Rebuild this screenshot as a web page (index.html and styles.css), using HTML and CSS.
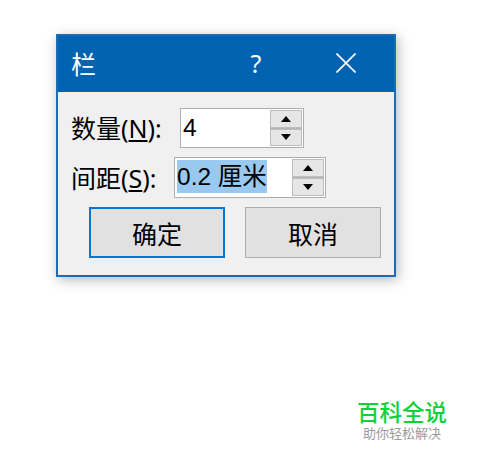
FILE: index.html
```html
<!DOCTYPE html>
<html lang="zh">
<head>
<meta charset="utf-8">
<title>栏</title>
<link rel="stylesheet" href="styles.css">
</head>
<body>
<div class="dialog">
  <header class="titlebar">
    <span class="title">栏</span>
    <span class="help">?</span>
    <svg class="close" width="20" height="20" viewBox="0 0 20 20"><path d="M0.5 0.5L19.5 19.5M19.5 0.5L0.5 19.5" stroke="#fff" stroke-width="1.6" fill="none"/></svg>
  </header>
  <div class="body">
    <div class="row row-count">
      <label class="label label-count">数量(<u>N</u>):</label>
      <div class="spin spin-count">
        <span class="value">4</span>
        <div class="arrows">
          <span class="arrow"><i class="up"></i></span>
          <span class="arrow"><i class="down"></i></span>
        </div>
      </div>
    </div>
    <div class="row row-gap">
      <label class="label label-gap">间距(<u>S</u>):</label>
      <div class="spin spin-gap">
        <span class="value"><span class="selected">0.2 厘米</span></span>
        <div class="arrows">
          <span class="arrow"><i class="up"></i></span>
          <span class="arrow"><i class="down"></i></span>
        </div>
      </div>
    </div>
    <div class="buttons">
      <button class="btn btn-default">确定</button>
      <button class="btn">取消</button>
    </div>
  </div>
</div>
<div class="watermark">
  <div class="wm-main">百科全说</div>
  <div class="wm-sub">助你轻松解决</div>
</div>
</body>
</html>
```
FILE: styles.css
```css
* { box-sizing: border-box; }
html, body { margin: 0; height: 100%; }
body {
  background: #fff;
  padding: 34px 0 0 56px;
  position: relative;
  overflow: hidden;
  font-family: "Noto Sans CJK SC", "Liberation Sans", sans-serif;
  color: #000;
}
.dialog {
  width: 340px;
  height: 243px;
  border: 2px solid #1a6db5;
  background: #f0f0f0;
  box-shadow: 2px 3px 12px rgba(0,0,0,.28);
  display: flex;
  flex-direction: column;
}
.titlebar {
  height: 56px;
  background: #0063b1;
  color: #fff;
  display: flex;
  align-items: center;
  padding: 0 0 2px 13px;
  flex: none;
}
.title { font-size: 25px; line-height: 30px; width: 178px; }
.help { font-family: "Noto Sans", sans-serif; font-size: 25px; line-height: 30px; width: 14px; text-align: center; }
.close { margin-left: 73px; }
.body { flex: 1; display: flex; flex-direction: column; padding: 16px 0 0 13px; }
.row { display: flex; align-items: center; }
.label { font-size: 25px; line-height: 40px; font-family: "Noto Sans", "Noto Sans CJK SC", sans-serif; flex: none; }
.label-count { width: 109px; }
.label-gap { width: 103px; }
.row-count { height: 40px; }
.row-gap { height: 41px; margin-top: 9px; }
.spin-count { width: 124px; }
.spin-gap { width: 152px; }
.spin {
  height: 100%;
  border: 1px solid #adadad;
  background: #fff;
  display: flex;
  padding: 1px;
}
.value {
  flex: 1;
  font-family: "Liberation Sans", "Noto Sans CJK SC", sans-serif;
  font-size: 24.5px;
  line-height: 33px;
  padding: 1px 0 0 1px;
  white-space: nowrap;
}
.selected { background: #99c9ef; display: inline-block; height: 33px; line-height: 33px; }
.arrows { width: 32px; display: flex; flex-direction: column; gap: 1px; flex: none; background: #b5b5b5; }
.arrow {
  flex: 1;
  background: #e6e6e6;
  border: 1px solid #bdbdbd;
  display: flex;
  align-items: center;
  justify-content: center;
}
.arrow i { width: 0; height: 0; border-left: 5px solid transparent; border-right: 5px solid transparent; }
.arrow .up { border-bottom: 6px solid #000; }
.arrow .down { border-top: 6px solid #000; }
.buttons { display: flex; gap: 20px; margin: 9px 0 0 18px; }
.btn {
  width: 136px;
  height: 51px;
  background: #e1e1e1;
  border: 1px solid #adadad;
  font-family: "Noto Sans CJK SC", sans-serif;
  font-size: 25px;
  padding: 0;
  color: #000;
}
.btn-default { border: 2px solid #0078d7; }
.watermark {
  position: absolute;
  left: 357px;
  top: 397px;
  width: 90px;
  text-align: center;
}
.wm-main { font-size: 22.5px; line-height: 28px; font-weight: 500; color: #0fd13c; }
.wm-sub { font-size: 13px; line-height: 16px; color: #9a9a9a; }
```
